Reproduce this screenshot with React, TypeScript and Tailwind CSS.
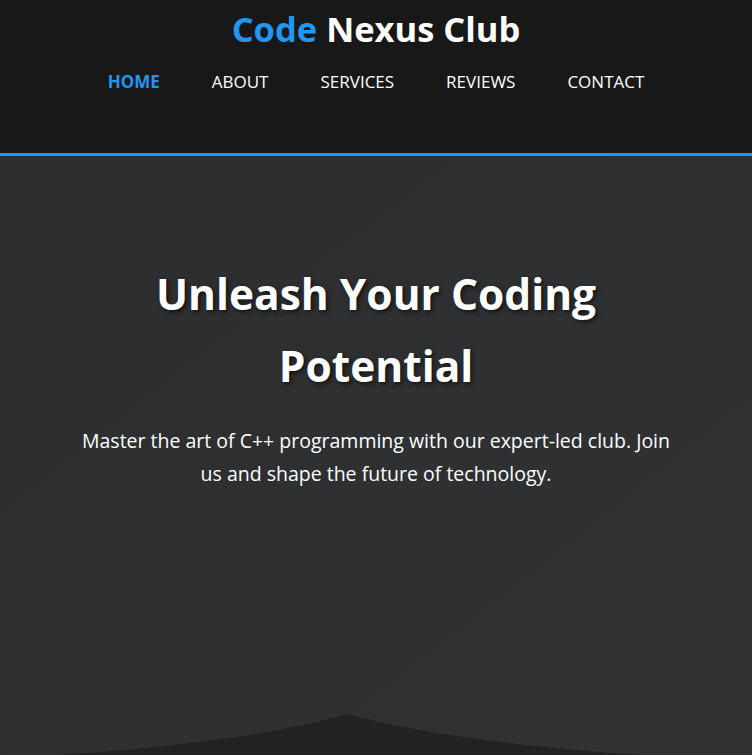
const navItems = ["Home", "About", "Services", "Reviews", "Contact"];

const Header = () => {
  return (
    <header className="bg-[#181818] h-[153px] border-b-[3px] border-[#2196f3] box-content">
      <h1 className="text-center text-[34.5px] font-bold leading-none pt-[12px] text-white">
        <span className="text-[#2196f3]">Code</span> Nexus Club
      </h1>
      <nav className="flex justify-center gap-[52px] mt-[22px]">
        {navItems.map((item, i) => (
          <a
            key={item}
            href="#"
            className={
              i === 0
                ? "uppercase text-[17px] font-bold text-[#2196f3]"
                : "uppercase text-[17px] text-white"
            }
          >
            {item}
          </a>
        ))}
      </nav>
    </header>
  );
};

const Hero = () => {
  return (
    <section className="relative flex-1 bg-[#2f3032] bg-gradient-to-br from-[#2c2d2f] to-[#313234] overflow-hidden">
      <div className="flex flex-col items-center text-center pt-[102px] px-20">
        <h2 className="text-[42.5px] font-bold leading-[72px] text-white max-w-[480px] [text-shadow:2px_2px_4px_rgba(0,0,0,0.6)]">
          Unleash Your Coding Potential
        </h2>
        <p className="text-[19.5px] leading-[33px] text-white mt-[22px] max-w-[600px]">
          Master the art of C++ programming with our expert-led club. Join us
          and shape the future of technology.
        </p>
      </div>
      <svg
        className="absolute bottom-0 left-0"
        width="752"
        height="45"
        viewBox="0 710 752 45"
      >
        <path d="M 60 755 Q 250 742 347 714 Q 450 742 640 755 Z" fill="#222222" />
      </svg>
    </section>
  );
};

export default function App() {
  return (
    <div className="flex flex-col h-[755px] overflow-hidden font-['Open_Sans',sans-serif]">
      <Header />
      <Hero />
    </div>
  );
}
